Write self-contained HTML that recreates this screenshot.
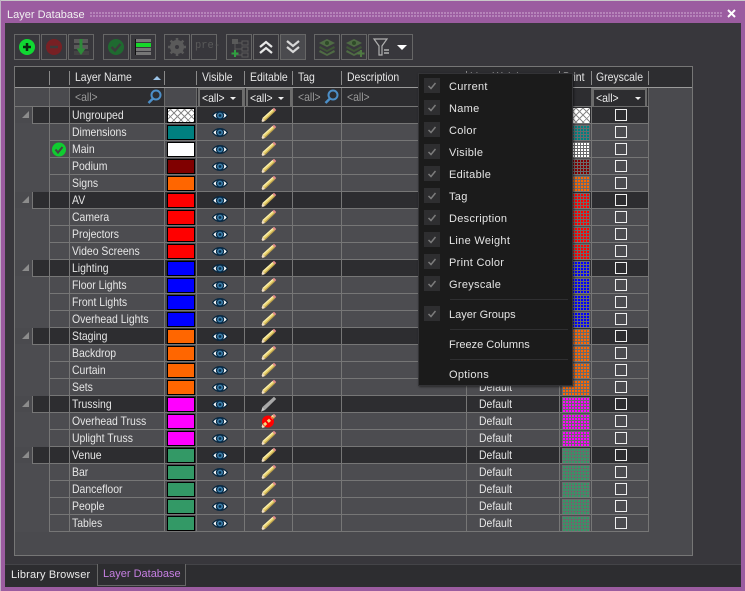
<!DOCTYPE html>
<html><head><meta charset="utf-8">
<style>
html,body{margin:0;padding:0;background:#9b5ca0}
body{width:745px;height:591px;position:relative;overflow:hidden;font-family:"Liberation Sans",sans-serif;font-size:12px;color:#e6e6e6}
div,span,i,b,svg{position:absolute;display:block;font-style:normal;font-weight:normal;white-space:nowrap}
.t{transform:scaleX(.87);transform-origin:0 50%;line-height:17px}
.btn{top:34px;width:24px;height:24px;border:1px solid #666;background:#38373c}
.btn svg{left:0;top:0}
.r{left:15px;width:634px;height:16px;border-bottom:1px solid #767676;background:#4c4c50}
.r.g{background:#2d2d30}
.r .pad{left:0;top:0;width:34px;height:17px;background:#4c4c50}
.r.g .pad{width:17px;height:17px;background:#4a4a4e}
.r.g .l{left:17px;top:0;width:1px;height:17px;background:#767676}
.r .cov{left:0;top:16px;width:34px;height:1px;background:#4c4c50}
.r.g .cov{width:17px}
.tri{left:7px;top:4px;width:0;height:0;border-style:solid;border-width:0 0 7px 7px;border-color:transparent transparent #8c8c8c transparent}
.n{left:57px;top:0}
.c{left:152px;top:1px;width:26px;height:13px;border:1px solid #000;background:var(--c)}
.e{left:197px;top:4px}
.p{left:244px;top:0}
.d{left:464px;top:0}
.q{left:547px;top:1px;width:28px;height:15px;background-color:var(--c);background-image:linear-gradient(90deg,#6a6a6c 1px,transparent 1px),linear-gradient(#6a6a6c 1px,transparent 1px);background-size:3px 3px}
.x{left:600px;top:2px;width:10px;height:10px;border:1px solid #eee}
.chk{background:repeating-linear-gradient(45deg,#8a8a8a 0 1px,transparent 1px 5px),repeating-linear-gradient(-45deg,#8a8a8a 0 1px,transparent 1px 5px),#fff}
.v{top:107px;width:1px;height:425px;background:#767676}
.hs{top:71px;width:1px;height:14px;background:#8a8a8a}
.fl{top:88px;width:1px;height:18px;background:#6a6a6a}
.ht{top:69px}
.all{top:89px;color:#9a9a9a;line-height:17px;transform:scaleX(.87);transform-origin:0 50%}
.combo{top:88px;height:16px;border:2px solid #6c6c6c;background:#2d2d30}
.combo span{left:2px;top:0;line-height:17px;color:#eee;transform:scaleX(.87);transform-origin:0 50%}
.combo u{position:absolute;display:block;top:7px;width:0;height:0;border-style:solid;border-width:3px 3px 0 3px;border-color:#eee transparent transparent transparent}
.m{left:449px;font-size:11px;letter-spacing:.3px;line-height:16px;color:#e4e4e4}
.b{left:424px;width:16px;height:15px;background:#2e2e30}
.b svg{left:0;top:0}
.sep{left:450px;width:118px;height:1px;background:#2f2f31}
</style></head><body>
<svg width="0" height="0" style="left:0;top:0"><defs>
<symbol id="eye" viewBox="0 0 16 9"><path d="M.6 4.500 Q3.500 .6 8 .6 Q12.500 .6 15.400 4.500 Q12.500 8.400 8 8.400 Q3.500 8.400 .6 4.500Z" fill="#fff" stroke="#06263e" stroke-width="1.200"/><circle cx="8" cy="4.500" r="4.200" fill="#0a2c48"/><circle cx="8" cy="4.500" r="2.900" fill="#3f82ae"/><circle cx="8" cy="4.500" r="1.400" fill="#0c2c46"/></symbol>
<symbol id="pen" viewBox="0 0 18 17"><path d="M3.500 11 L13.500 2 L16 4.500 L6 14Z" fill="#ecd672"/><path d="M3.500 11 L13.500 2 L14.300 2.800 L4.300 11.800Z" fill="#fdf2b4"/><path d="M5.300 13.300 L15.300 3.800 L16 4.500 L6 14Z" fill="#b89c48"/><path d="M13.500 2 L15 .8 L17.200 3 L16 4.500Z" fill="#e58b8b"/><path d="M2 15.800 L3.500 11 L6 14Z" fill="#f2dfc4"/><path d="M2 15.800 L2.600 14 L3.600 15Z" fill="#222"/></symbol>
<symbol id="mag" viewBox="0 0 15 15"><circle cx="9" cy="6" r="4.500" fill="none" stroke="#4c8fc8" stroke-width="2"/><path d="M6 9.500 L1.500 14" stroke="#4c8fc8" stroke-width="2.500"/></symbol>
<symbol id="ck" viewBox="0 0 16 15"><path d="M4.500 8 L7 10.500 L11.500 5" fill="none" stroke="#7c7c7c" stroke-width="1.500"/></symbol>
<symbol id="ly" viewBox="0 0 24 24"><path d="M12 4 L20 8 L12 12 L4 8Z" fill="#4f6b44"/><path d="M5 11 L12 15 L19 11 L20 13 L12 17 L4 13Z" fill="#3f5836"/><path d="M5 15 L12 19 L19 15 L20 17 L12 21 L4 17Z" fill="#4f6b44"/><circle cx="12" cy="8" r="2" fill="#2e4a28"/></symbol>
</defs></svg>

<!-- title -->
<div style="left:0;top:0;width:745px;height:1px;background:#c8c8c8"></div>
<div style="left:0;top:0;width:1px;height:591px;background:#c0b0c4"></div>
<div style="left:7px;top:7px;font-size:11px;letter-spacing:0;line-height:16px;color:#f0f0f0">Layer Database</div>
<div style="left:90px;top:12px;width:632px;height:6px;background:radial-gradient(circle at 1px 1px,#bf91c2 .8px,transparent 1px) 0 0/3px 3px"></div>
<svg style="left:726px;top:8px" width="11" height="11"><path d="M2 2 L9 9 M9 2 L2 9" stroke="#fff" stroke-width="2"/></svg>

<!-- main -->
<div style="left:5px;top:23px;width:736px;height:541px;background:#38373c"></div>
<div style="left:5px;top:564px;width:736px;height:23px;background:#2d2d30;border-top:1px solid #444448;box-sizing:border-box"></div>
<div style="left:11px;top:567px;font-size:11px;letter-spacing:.15px;line-height:16px;color:#ececec">Library Browser</div>
<div style="left:97px;top:564px;width:87px;height:21px;border:1px solid #666;border-top:none;background:#2d2d30"></div>
<div style="left:103px;top:566px;font-size:11px;letter-spacing:0;line-height:16px;color:#c67fe2">Layer Database</div>

<!-- toolbar -->
<div class="btn" style="left:14px"><svg width="24" height="24"><circle cx="12" cy="12" r="8" fill="#10d832"/><path d="M12 8 V16 M8 12 H16" stroke="#0a2a10" stroke-width="2.500"/></svg></div>
<div class="btn" style="left:41px"><svg width="24" height="24"><circle cx="12" cy="12" r="8" fill="#782024"/><path d="M8 12 H16" stroke="#3c3c3c" stroke-width="2.500"/></svg></div>
<div class="btn" style="left:68px"><svg width="24" height="24"><path d="M5 4 H19 V8 H5Z M5 10 H19 V14 H5Z" fill="#5a5a5a"/><rect x="5" y="16" width="15" height="4" fill="#444"/><path d="M12 4 V16" stroke="#2e8a3a" stroke-width="3"/><path d="M7.500 13.500 H16.500 L12 20Z" fill="#2e8a3a"/></svg></div>
<div class="btn" style="left:103px"><svg width="24" height="24"><circle cx="12" cy="12" r="8" fill="#1f6a30"/><path d="M7.500 12 L11 15.500 L16.500 9" fill="none" stroke="#3c3c3c" stroke-width="2.500"/></svg></div>
<div class="btn" style="left:130px"><svg width="24" height="24"><rect x="5" y="4" width="15" height="3" fill="#777"/><rect x="5" y="8" width="15" height="4" fill="#16d82a"/><rect x="5" y="13" width="15" height="3" fill="#777"/><rect x="5" y="17" width="15" height="3" fill="#777"/><rect x="4" y="4" width="1" height="16" fill="#111"/></svg></div>
<div class="btn" style="left:164px"><svg width="24" height="24"><circle cx="12" cy="12" r="5" fill="none" stroke="#5a5a5a" stroke-width="4"/><path d="M12 3 V21 M3 12 H21 M5.600 5.600 L18.400 18.400 M18.400 5.600 L5.600 18.400" stroke="#5a5a5a" stroke-width="2.500"/><circle cx="12" cy="12" r="2" fill="#38373c"/></svg></div>
<div class="btn" style="left:191px"><div style="left:3px;top:3px;color:#5a5a5a;font-family:'Liberation Mono',monospace;font-size:11px;line-height:16px;transform:scaleX(.95);transform-origin:0 50%">pre-</div></div>
<div class="btn" style="left:226px"><svg width="24" height="24"><rect x="5" y="4" width="6" height="5" fill="#5a5a5a"/><rect x="15" y="6" width="6" height="4" fill="none" stroke="#5a5a5a"/><rect x="15" y="12" width="6" height="4" fill="none" stroke="#5a5a5a"/><rect x="15" y="18" width="6" height="4" fill="none" stroke="#5a5a5a"/><path d="M8 9 V20 H15 M8 14 H15 M11 8 H15" fill="none" stroke="#5a5a5a"/><path d="M8 15 V22 M4.500 18.500 H11.500" stroke="#2fa040" stroke-width="2"/></svg></div>
<div class="btn" style="left:253px"><svg width="24" height="24"><path d="M6 12 L12 7 L18 12 M6 18 L12 13 L18 18" fill="none" stroke="#e8e8e8" stroke-width="2.200"/></svg></div>
<div class="btn" style="left:280px;background:#4a4a4e"><svg width="24" height="24"><path d="M6 6 L12 11 L18 6 M6 12 L12 17 L18 12" fill="none" stroke="#d8d8d8" stroke-width="2.200"/></svg></div>
<div class="btn" style="left:314px"><svg width="24" height="24"><use href="#ly"/></svg></div>
<div class="btn" style="left:341px"><svg width="24" height="24"><use href="#ly"/><path d="M19 15 V22 M15.500 18.500 H22.500" stroke="#4f7a42" stroke-width="2"/></svg></div>
<div class="btn" style="left:368px;width:43px"><svg width="43" height="24"><path d="M5 4 H18 L13 11 V20 H10 V11Z" fill="none" stroke="#b0b0b0" stroke-width="1.200"/><path d="M15 15 H20 M15 18 H20" stroke="#b0b0b0" stroke-width="1.500"/><path d="M28 10 H38 L33 15Z" fill="#fff"/></svg></div>

<!-- grid frame -->
<div style="left:14px;top:66px;width:677px;height:488px;border:1px solid #767676;background:#4a4a4e"></div>
<div style="left:15px;top:67px;width:677px;height:20px;background:#2d2d30"></div>
<div style="left:15px;top:87px;width:677px;height:1px;background:#9a9a9a"></div>
<div style="left:70px;top:88px;width:94px;height:18px;background:#2d2d30"></div>
<div style="left:197px;top:88px;width:452px;height:18px;background:#2d2d30"></div>
<div style="left:15px;top:106px;width:634px;height:1px;background:#767676"></div>
<div class="hs" style="left:49px"></div><div class="hs" style="left:69px"></div><div class="hs" style="left:164px"></div><div class="hs" style="left:196px"></div><div class="hs" style="left:244px"></div><div class="hs" style="left:292px"></div><div class="hs" style="left:341px"></div><div class="hs" style="left:466px"></div><div class="hs" style="left:559px"></div><div class="hs" style="left:591px"></div><div class="hs" style="left:648px"></div>
<div class="fl" style="left:49px"></div><div class="fl" style="left:69px"></div><div class="fl" style="left:164px"></div><div class="fl" style="left:196px"></div><div class="fl" style="left:244px"></div><div class="fl" style="left:292px"></div><div class="fl" style="left:341px"></div><div class="fl" style="left:466px"></div><div class="fl" style="left:559px"></div><div class="fl" style="left:591px"></div><div class="fl" style="left:648px"></div>
<div class="t ht" style="left:75px">Layer Name</div>
<div style="left:153px;top:76px;width:0;height:0;border-style:solid;border-width:0 4px 4px 4px;border-color:transparent transparent #9cc4e8 transparent"></div>
<div class="t ht" style="left:202px">Visible</div>
<div class="t ht" style="left:250px">Editable</div>
<div class="t ht" style="left:298px">Tag</div>
<div class="t ht" style="left:347px">Description</div>
<div class="t ht" style="left:470px">Line Weight</div>
<div class="t ht" style="left:563px">Print</div>
<div class="t ht" style="left:596px">Greyscale</div>

<div class="all" style="left:75px">&lt;all&gt;</div>
<svg style="left:147px;top:89px" width="15" height="15"><use href="#mag"/></svg>
<div class="all" style="left:298px">&lt;all&gt;</div>
<svg style="left:324px;top:89px" width="15" height="15"><use href="#mag"/></svg>
<div class="all" style="left:347px">&lt;all&gt;</div>
<div class="combo" style="left:198px;width:42px"><span>&lt;all&gt;</span><u style="left:30px"></u></div>
<div class="combo" style="left:246px;width:42px"><span>&lt;all&gt;</span><u style="left:30px"></u></div>
<div class="combo" style="left:592px;width:51px"><span>&lt;all&gt;</span><u style="left:41px"></u></div>

<!-- rows -->
<div class="r g" style="top:107px;--c:#fff"><i class="pad"></i><i class="tri"></i><i class="l"></i><i class="cov"></i><span class="t n">Ungrouped</span><i class="c chk"></i><svg class="e" width="16" height="9"><use href="#eye"/></svg><svg class="p" width="18" height="17"><use href="#pen"/></svg><i class="q chk"></i><i class="x"></i></div>
<div class="r" style="top:124px;--c:#008080"><i class="pad"></i><span class="t n">Dimensions</span><i class="c"></i><svg class="e" width="16" height="9"><use href="#eye"/></svg><svg class="p" width="18" height="17"><use href="#pen"/></svg><i class="q"></i><i class="x"></i></div>
<div class="r" style="top:141px;--c:#fff"><i class="pad"></i><span class="t n">Main</span><i class="c"></i><svg class="e" width="16" height="9"><use href="#eye"/></svg><svg class="p" width="18" height="17"><use href="#pen"/></svg><i class="q"></i><i class="x"></i></div>
<div class="r" style="top:158px;--c:#800000"><i class="pad"></i><span class="t n">Podium</span><i class="c"></i><svg class="e" width="16" height="9"><use href="#eye"/></svg><svg class="p" width="18" height="17"><use href="#pen"/></svg><i class="q"></i><i class="x"></i></div>
<div class="r" style="top:175px;--c:#ff6600"><i class="pad"></i><span class="t n">Signs</span><i class="c"></i><svg class="e" width="16" height="9"><use href="#eye"/></svg><svg class="p" width="18" height="17"><use href="#pen"/></svg><i class="q"></i><i class="x"></i></div>
<div class="r g" style="top:192px;--c:#ff0000"><i class="pad"></i><i class="tri"></i><i class="l"></i><i class="cov"></i><span class="t n">AV</span><i class="c"></i><svg class="e" width="16" height="9"><use href="#eye"/></svg><svg class="p" width="18" height="17"><use href="#pen"/></svg><i class="q"></i><i class="x"></i></div>
<div class="r" style="top:209px;--c:#ff0000"><i class="pad"></i><span class="t n">Camera</span><i class="c"></i><svg class="e" width="16" height="9"><use href="#eye"/></svg><svg class="p" width="18" height="17"><use href="#pen"/></svg><i class="q"></i><i class="x"></i></div>
<div class="r" style="top:226px;--c:#ff0000"><i class="pad"></i><span class="t n">Projectors</span><i class="c"></i><svg class="e" width="16" height="9"><use href="#eye"/></svg><svg class="p" width="18" height="17"><use href="#pen"/></svg><i class="q"></i><i class="x"></i></div>
<div class="r" style="top:243px;--c:#ff0000"><i class="pad"></i><span class="t n">Video Screens</span><i class="c"></i><svg class="e" width="16" height="9"><use href="#eye"/></svg><svg class="p" width="18" height="17"><use href="#pen"/></svg><i class="q"></i><i class="x"></i></div>
<div class="r g" style="top:260px;--c:#0000ff"><i class="pad"></i><i class="tri"></i><i class="l"></i><i class="cov"></i><span class="t n">Lighting</span><i class="c"></i><svg class="e" width="16" height="9"><use href="#eye"/></svg><svg class="p" width="18" height="17"><use href="#pen"/></svg><i class="q"></i><i class="x"></i></div>
<div class="r" style="top:277px;--c:#0000ff"><i class="pad"></i><span class="t n">Floor Lights</span><i class="c"></i><svg class="e" width="16" height="9"><use href="#eye"/></svg><svg class="p" width="18" height="17"><use href="#pen"/></svg><i class="q"></i><i class="x"></i></div>
<div class="r" style="top:294px;--c:#0000ff"><i class="pad"></i><span class="t n">Front Lights</span><i class="c"></i><svg class="e" width="16" height="9"><use href="#eye"/></svg><svg class="p" width="18" height="17"><use href="#pen"/></svg><i class="q"></i><i class="x"></i></div>
<div class="r" style="top:311px;--c:#0000ff"><i class="pad"></i><span class="t n">Overhead Lights</span><i class="c"></i><svg class="e" width="16" height="9"><use href="#eye"/></svg><svg class="p" width="18" height="17"><use href="#pen"/></svg><i class="q"></i><i class="x"></i></div>
<div class="r g" style="top:328px;--c:#ff6600"><i class="pad"></i><i class="tri"></i><i class="l"></i><i class="cov"></i><span class="t n">Staging</span><i class="c"></i><svg class="e" width="16" height="9"><use href="#eye"/></svg><svg class="p" width="18" height="17"><use href="#pen"/></svg><i class="q"></i><i class="x"></i></div>
<div class="r" style="top:345px;--c:#ff6600"><i class="pad"></i><span class="t n">Backdrop</span><i class="c"></i><svg class="e" width="16" height="9"><use href="#eye"/></svg><svg class="p" width="18" height="17"><use href="#pen"/></svg><i class="q"></i><i class="x"></i></div>
<div class="r" style="top:362px;--c:#ff6600"><i class="pad"></i><span class="t n">Curtain</span><i class="c"></i><svg class="e" width="16" height="9"><use href="#eye"/></svg><svg class="p" width="18" height="17"><use href="#pen"/></svg><i class="q"></i><i class="x"></i></div>
<div class="r" style="top:379px;--c:#ff6600"><i class="pad"></i><span class="t n">Sets</span><i class="c"></i><svg class="e" width="16" height="9"><use href="#eye"/></svg><svg class="p" width="18" height="17"><use href="#pen"/></svg><span class="t d">Default</span><i class="q"></i><i class="x"></i></div>
<div class="r g" style="top:396px;--c:#ff00ff"><i class="pad"></i><i class="tri"></i><i class="l"></i><i class="cov"></i><span class="t n">Trussing</span><i class="c"></i><svg class="e" width="16" height="9"><use href="#eye"/></svg><svg class="p" width="18" height="17" viewBox="0 0 18 17"><path d="M3.500 11 L15 .8 L17.200 3 L6 14Z" fill="#a8a8a8"/><path d="M2 15.800 L3.500 11 L6 14Z" fill="#c8c8c8"/></svg><span class="t d">Default</span><i class="q"></i><i class="x"></i></div>
<div class="r" style="top:413px;--c:#ff00ff"><i class="pad"></i><span class="t n">Overhead Truss</span><i class="c"></i><svg class="e" width="16" height="9"><use href="#eye"/></svg><svg class="p" width="18" height="17"><use href="#pen"/><circle cx="9" cy="8.500" r="6" fill="#f00"/><path d="M5 12 L13 5" stroke="#f2dc80" stroke-width="3" stroke-dasharray="3 2"/></svg><span class="t d">Default</span><i class="q"></i><i class="x"></i></div>
<div class="r" style="top:430px;--c:#ff00ff"><i class="pad"></i><span class="t n">Uplight Truss</span><i class="c"></i><svg class="e" width="16" height="9"><use href="#eye"/></svg><svg class="p" width="18" height="17"><use href="#pen"/></svg><span class="t d">Default</span><i class="q"></i><i class="x"></i></div>
<div class="r g" style="top:447px;--c:#339966"><i class="pad"></i><i class="tri"></i><i class="l"></i><i class="cov"></i><span class="t n">Venue</span><i class="c"></i><svg class="e" width="16" height="9"><use href="#eye"/></svg><svg class="p" width="18" height="17"><use href="#pen"/></svg><span class="t d">Default</span><i class="q"></i><i class="x"></i></div>
<div class="r" style="top:464px;--c:#339966"><i class="pad"></i><span class="t n">Bar</span><i class="c"></i><svg class="e" width="16" height="9"><use href="#eye"/></svg><svg class="p" width="18" height="17"><use href="#pen"/></svg><span class="t d">Default</span><i class="q"></i><i class="x"></i></div>
<div class="r" style="top:481px;--c:#339966"><i class="pad"></i><span class="t n">Dancefloor</span><i class="c"></i><svg class="e" width="16" height="9"><use href="#eye"/></svg><svg class="p" width="18" height="17"><use href="#pen"/></svg><span class="t d">Default</span><i class="q"></i><i class="x"></i></div>
<div class="r" style="top:498px;--c:#339966"><i class="pad"></i><span class="t n">People</span><i class="c"></i><svg class="e" width="16" height="9"><use href="#eye"/></svg><svg class="p" width="18" height="17"><use href="#pen"/></svg><span class="t d">Default</span><i class="q"></i><i class="x"></i></div>
<div class="r" style="top:515px;--c:#339966"><i class="pad"></i><span class="t n">Tables</span><i class="c"></i><svg class="e" width="16" height="9"><use href="#eye"/></svg><svg class="p" width="18" height="17"><use href="#pen"/></svg><span class="t d">Default</span><i class="q"></i><i class="x"></i></div>

<div class="v" style="left:49px"></div><div class="v" style="left:69px"></div><div class="v" style="left:164px"></div><div class="v" style="left:196px"></div><div class="v" style="left:244px"></div><div class="v" style="left:292px"></div><div class="v" style="left:341px"></div><div class="v" style="left:466px"></div><div class="v" style="left:559px"></div><div class="v" style="left:591px"></div><div class="v" style="left:648px"></div>

<!-- current check -->
<svg style="left:51px;top:142px" width="16" height="15"><circle cx="8" cy="7.500" r="7" fill="#10cc30"/><path d="M4.500 7.500 L7 10.500 L11.500 5" fill="none" stroke="#444" stroke-width="2"/></svg>

<!-- menu -->
<div style="left:418px;top:73px;width:153px;height:311px;background:#1b1b1b;border:1px solid #333336;box-shadow:1px 1px 2px rgba(0,0,0,.5)"></div>
<div class="b" style="top:78px"><svg width="16" height="15"><use href="#ck"/></svg></div><div class="m" style="top:79px">Current</div>
<div class="b" style="top:100px"><svg width="16" height="15"><use href="#ck"/></svg></div><div class="m" style="top:101px">Name</div>
<div class="b" style="top:122px"><svg width="16" height="15"><use href="#ck"/></svg></div><div class="m" style="top:123px">Color</div>
<div class="b" style="top:144px"><svg width="16" height="15"><use href="#ck"/></svg></div><div class="m" style="top:145px">Visible</div>
<div class="b" style="top:166px"><svg width="16" height="15"><use href="#ck"/></svg></div><div class="m" style="top:167px">Editable</div>
<div class="b" style="top:188px"><svg width="16" height="15"><use href="#ck"/></svg></div><div class="m" style="top:189px">Tag</div>
<div class="b" style="top:210px"><svg width="16" height="15"><use href="#ck"/></svg></div><div class="m" style="top:211px">Description</div>
<div class="b" style="top:232px"><svg width="16" height="15"><use href="#ck"/></svg></div><div class="m" style="top:233px">Line Weight</div>
<div class="b" style="top:254px"><svg width="16" height="15"><use href="#ck"/></svg></div><div class="m" style="top:255px">Print Color</div>
<div class="b" style="top:276px"><svg width="16" height="15"><use href="#ck"/></svg></div><div class="m" style="top:277px">Greyscale</div>
<div class="sep" style="top:299px"></div>
<div class="b" style="top:306px"><svg width="16" height="15"><use href="#ck"/></svg></div><div class="m" style="top:307px;letter-spacing:0">Layer Groups</div>
<div class="sep" style="top:329px"></div>
<div class="m" style="top:337px;letter-spacing:0">Freeze Columns</div>
<div class="sep" style="top:359px"></div>
<div class="m" style="top:367px">Options</div>
</body></html>
